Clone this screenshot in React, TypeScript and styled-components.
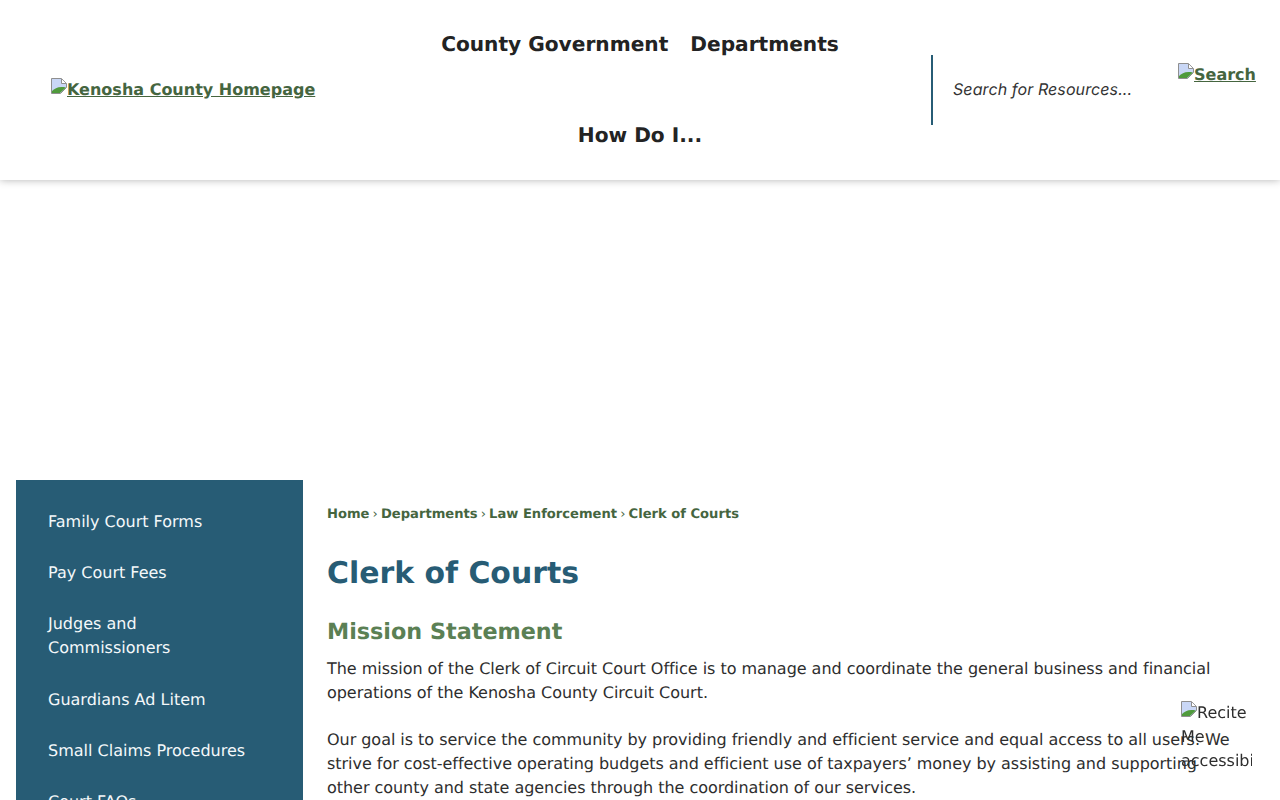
import React from 'react';
import styled, { createGlobalStyle } from 'styled-components';

const GlobalStyle = createGlobalStyle`
  html, body {
    margin: 0;
    padding: 0;
    background: #fff;
    overflow: hidden;
  }
  body {
    font-family: "DejaVu Sans", sans-serif;
    font-size: 16px;
    line-height: 24px;
    color: #2e2e2e;
    text-rendering: geometricPrecision;
  }
`;

const Page = styled.div`
  height: 800px;
  overflow: hidden;
`;

const Header = styled.header`
  display: flex;
  align-items: center;
  height: 180px;
  background: #fff;
  box-shadow: 0 0 8px rgba(0, 0, 0, 0.3);
  position: relative;
`;

const LogoCell = styled.div`
  flex: 0 0 370px;
  padding-left: 51px;
  box-sizing: border-box;
`;

const TextLink = styled.a`
  color: #45653f;
  font-weight: 700;
  font-size: 16px;
  text-decoration: underline;
`;

const Nav = styled.nav`
  flex: 0 0 540px;
  display: flex;
  flex-wrap: wrap;
  justify-content: center;
`;

const NavItem = styled.a`
  padding: 30px 11px;
  font-size: 20.15px;
  line-height: 31px;
  font-weight: 700;
  color: #232323;
`;

const SearchCell = styled.div`
  flex: 1;
  display: flex;
  align-items: flex-start;
  padding-left: 21px;
  height: 70px;
`;

const SearchInput = styled.div`
  flex: 0 0 247px;
  box-sizing: border-box;
  height: 70px;
  border-left: 2px solid #275c75;
  padding-left: 20px;
  padding-bottom: 2px;
  display: flex;
  align-items: center;
  font-family: Inter, sans-serif;
  font-style: italic;
  font-size: 16px;
  letter-spacing: 0.1px;
  color: #333;
`;

const SearchButton = styled(TextLink)`
  margin-top: 8px;
`;

const Hero = styled.div`
  height: 300px;
`;

const Main = styled.main`
  display: flex;
  align-items: flex-start;
  padding: 0 16px;
  gap: 24px;
`;

const Sidebar = styled.aside`
  flex: 0 0 287px;
  box-sizing: border-box;
  background: #275c75;
  padding: 16px 50px 16px 32px;
  height: 400px;
`;

const SideLink = styled.a`
  display: block;
  padding: 13.67px 0;
  color: #f4f8fa;
  font-size: 16px;
  line-height: 24px;
`;

const Content = styled.div`
  flex: 1;
  padding: 25px 32px 0 0;
`;

const Breadcrumbs = styled.div`
  display: flex;
  align-items: center;
  font-size: 13.1px;
  line-height: 20px;
  font-weight: 700;
  color: #45653f;
`;

const CrumbSep = styled.span`
  width: 11.5px;
  text-align: center;
  font-weight: 400;
`;

const Title = styled.h1`
  margin: 27px 0 0;
  font-size: 29.9px;
  line-height: 44px;
  font-weight: 700;
  color: #275c75;
`;

const Subtitle = styled.h2`
  margin: 19px 0 0;
  font-size: 22.3px;
  line-height: 34px;
  font-weight: 700;
  color: #5b8054;
`;

const Paragraph = styled.p`
  margin: 8px 0 23px;
  letter-spacing: -0.036px;
`;

const ReciteWidget = styled.div`
  position: fixed;
  left: 1181px;
  top: 701px;
  width: 71px;
  height: 70px;
  overflow: hidden;
`;

const BrokenIcon = styled.svg`
  display: inline-block;
  width: 16px;
  height: 16px;
  vertical-align: 1px;
`;

const BrokenImage = () => (
  <BrokenIcon viewBox="0 0 16 16" aria-hidden="true">
    <path d="M0.5 0.5H10.5L15.5 5.5V9.5L9.5 15.5H0.5Z" fill="#c9d7f6" stroke="#8f8f8f" />
    <path d="M1 15V13C4 10 8 8 15 9.5L9 15Z" fill="#4f9a3c" />
    <path d="M10.5 1V5.5H15" fill="#fff" stroke="#8f8f8f" />
  </BrokenIcon>
);

const sideLinks = [
  'Family Court Forms',
  'Pay Court Fees',
  'Judges and Commissioners',
  'Guardians Ad Litem',
  'Small Claims Procedures',
  'Court FAQs',
];

const crumbs = ['Home', 'Departments', 'Law Enforcement', 'Clerk of Courts'];

export default function App() {
  return (
    <Page>
      <GlobalStyle />
      <Header>
        <LogoCell>
          <TextLink href="#">
            <BrokenImage />
            Kenosha County Homepage
          </TextLink>
        </LogoCell>
        <Nav>
          <NavItem>County Government</NavItem>
          <NavItem>Departments</NavItem>
          <NavItem>How Do I...</NavItem>
        </Nav>
        <SearchCell>
          <SearchInput>Search for Resources...</SearchInput>
          <SearchButton href="#">
            <BrokenImage />
            Search
          </SearchButton>
        </SearchCell>
      </Header>
      <Hero />
      <Main>
        <Sidebar>
          {sideLinks.map((label) => (
            <SideLink key={label}>{label}</SideLink>
          ))}
        </Sidebar>
        <Content>
          <Breadcrumbs>
            {crumbs.map((crumb, i) => (
              <React.Fragment key={crumb}>
                {i > 0 && <CrumbSep>›</CrumbSep>}
                <span>{crumb}</span>
              </React.Fragment>
            ))}
          </Breadcrumbs>
          <Title>Clerk of Courts</Title>
          <Subtitle>Mission Statement</Subtitle>
          <Paragraph>
            The mission of the Clerk of Circuit Court Office is to manage and coordinate the general
            business and financial operations of the Kenosha County Circuit Court.
          </Paragraph>
          <Paragraph>
            Our goal is to service the community by providing friendly and efficient service and
            equal access to all users. We strive for cost-effective operating budgets and efficient
            use of taxpayers’ money by assisting and supporting other county and state agencies
            through the coordination of our services.
          </Paragraph>
        </Content>
      </Main>
      <ReciteWidget>
        <BrokenImage />
        Recite Me accessibility Widget
      </ReciteWidget>
    </Page>
  );
}
